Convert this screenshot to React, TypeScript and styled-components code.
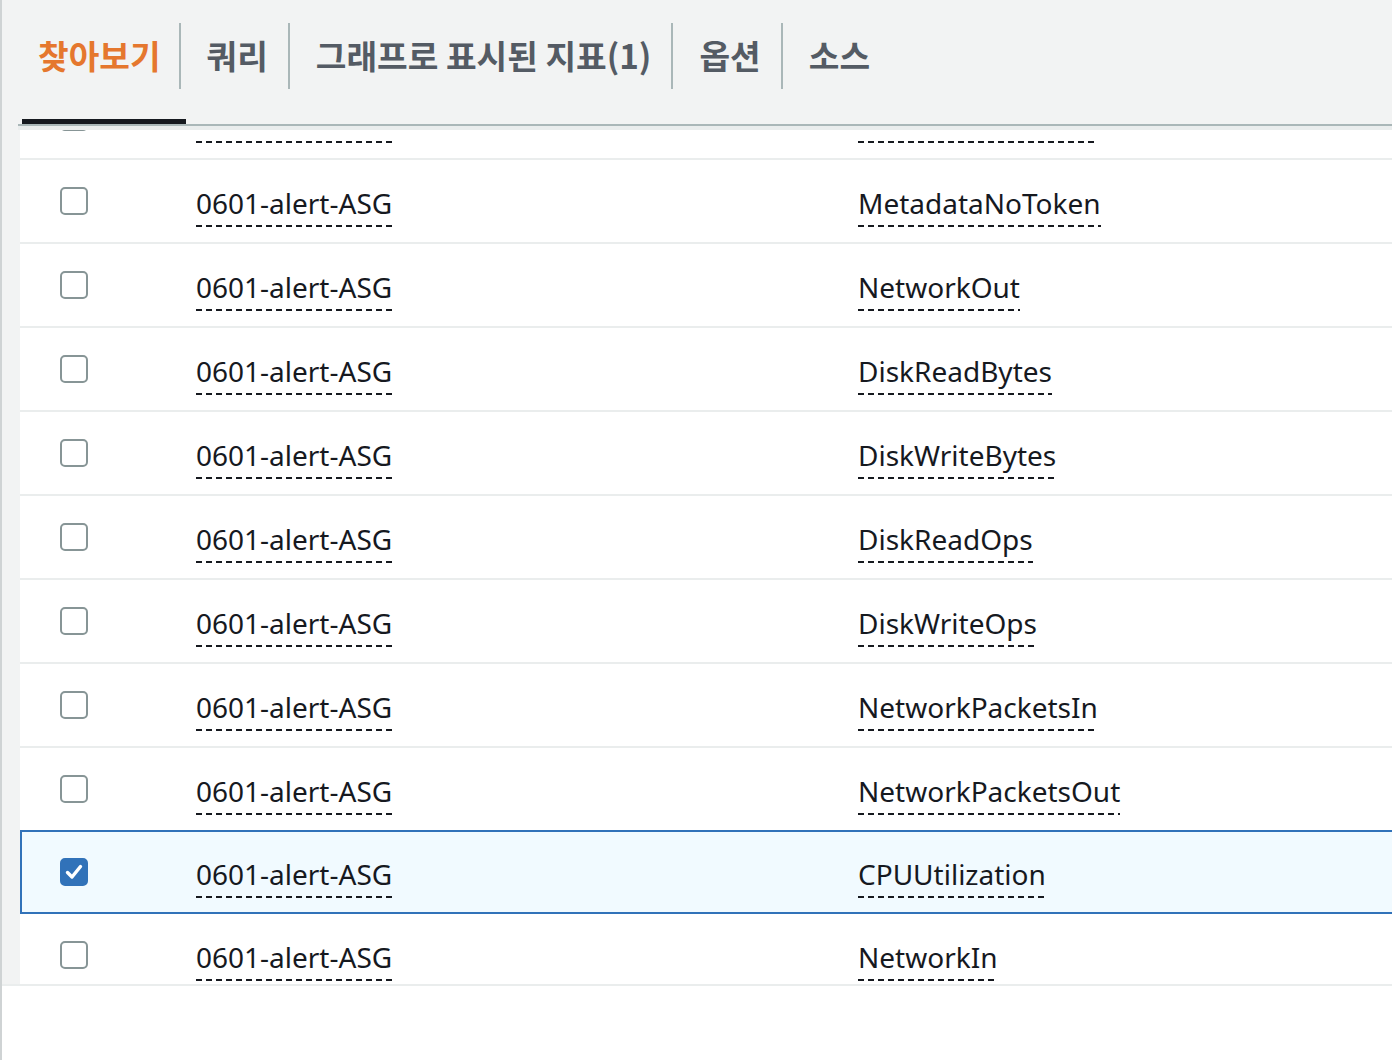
import React, { useLayoutEffect, useRef } from 'react';
import styled, { createGlobalStyle } from 'styled-components';

const tabs = ['찾아보기', '쿼리', '그래프로 표시된 지표(1)', '옵션', '소스'];

const metrics = [
  { name: '0601-alert-ASG', metric: 'StatusCheckFailed', checked: false },
  { name: '0601-alert-ASG', metric: 'MetadataNoToken', checked: false },
  { name: '0601-alert-ASG', metric: 'NetworkOut', checked: false },
  { name: '0601-alert-ASG', metric: 'DiskReadBytes', checked: false },
  { name: '0601-alert-ASG', metric: 'DiskWriteBytes', checked: false },
  { name: '0601-alert-ASG', metric: 'DiskReadOps', checked: false },
  { name: '0601-alert-ASG', metric: 'DiskWriteOps', checked: false },
  { name: '0601-alert-ASG', metric: 'NetworkPacketsIn', checked: false },
  { name: '0601-alert-ASG', metric: 'NetworkPacketsOut', checked: false },
  { name: '0601-alert-ASG', metric: 'CPUUtilization', checked: true },
  { name: '0601-alert-ASG', metric: 'NetworkIn', checked: false },
  { name: '0601-alert-ASG', metric: 'NetworkOut', checked: false },
];

const GlobalStyle = createGlobalStyle`
  html, body {
    margin: 0;
    padding: 0;
    background: #ffffff;
    overflow: hidden;
  }
  * { box-sizing: border-box; }
`;

const Page = styled.div`
  min-height: 1060px;
  background: #ffffff;
  border-left: 2px solid #cfd3d4;
  font-family: 'Noto Sans', 'Noto Sans CJK KR', sans-serif;
  color: #16191f;
`;

const Panel = styled.div`
  background: #f2f3f3;
  padding-left: 16px;
  border-bottom: 2px solid #eaeded;
  overflow: hidden;
`;

const TabBar = styled.div`
  display: flex;
  align-items: center;
  height: 126px;
  border-bottom: 2px solid #aab7b8;
  padding-left: 4px;
  padding-bottom: 12px;
`;

const Tab = styled.div<{ $active?: boolean; $first?: boolean }>`
  position: relative;
  display: flex;
  align-items: center;
  height: 66px;
  padding: 0 ${p => (p.$first ? '18px' : '20px')} 3px ${p => (p.$first ? '16px' : '26px')};
  border-left: ${p => (p.$first ? 'none' : '2px solid #aab7b8')};
  font-family: 'Noto Sans CJK KR', 'Noto Sans', sans-serif;
  font-size: 33.3px;
  font-weight: 700;
  color: ${p => (p.$active ? '#e5772e' : '#545b64')};

  &::after {
    content: '';
    display: ${p => (p.$active ? 'block' : 'none')};
    position: absolute;
    left: 0;
    right: -7px;
    bottom: -35px;
    height: 5px;
    background: #16191f;
  }
`;

const Band = styled.div`
  height: 4px;
  background: #eaeded;
`;

const Scroller = styled.div`
  height: 854px;
  margin-left: 2px;
  overflow: hidden;
  background: #ffffff;
`;

const Row = styled.div<{ $selected?: boolean }>`
  position: relative;
  display: grid;
  grid-template-columns: ${p => (p.$selected ? '174px' : '176px')} 662px 1fr;
  align-items: center;
  height: 84px;
  border-bottom: 2px solid #eaeded;
  background: #ffffff;

  ${p =>
    p.$selected &&
    `
    margin-top: -2px;
    background: #f1faff;
    border-top: 2px solid #3172b9;
    border-left: 2px solid #3172b9;
    border-bottom: 2px solid #3172b9;
  `}
`;

const CheckCell = styled.div<{ $selected?: boolean }>`
  padding-left: ${p => (p.$selected ? '38px' : '40px')};
  display: flex;
  align-items: center;
`;

const Box = styled.span<{ $checked?: boolean }>`
  display: inline-flex;
  align-items: center;
  justify-content: center;
  width: 28px;
  height: 28px;
  border-radius: 5px;
  border: 2px solid ${p => (p.$checked ? '#3172b9' : '#879596')};
  background: ${p => (p.$checked ? '#3172b9' : '#ffffff')};
`;

const Cell = styled.div`
  display: flex;
  align-items: center;
  padding-top: 10px;
`;

const Dotted = styled.span`
  display: inline-block;
  font-size: 28px;
  line-height: 34px;
  padding-bottom: 7px;
  white-space: nowrap;
  background-image: linear-gradient(to right, #16191f 60%, transparent 60%);
  background-size: 10px 2px;
  background-repeat: repeat-x;
  background-position: left bottom;
`;

const Check = () => (
  <svg width="20" height="20" viewBox="0 0 20 20">
    <polyline points="3.5,10.5 8,15 16.5,4.5" fill="none" stroke="#ffffff" strokeWidth="3.4" strokeLinecap="round" strokeLinejoin="round" />
  </svg>
);

export default function App() {
  const scrollRef = useRef<HTMLDivElement>(null);

  useLayoutEffect(() => {
    if (scrollRef.current) scrollRef.current.scrollTop = 54;
  }, []);

  return (
    <Page>
      <GlobalStyle />
      <Panel>
        <TabBar>
          {tabs.map((t, i) => (
            <Tab key={t} $first={i === 0} $active={i === 0}>
              {t}
            </Tab>
          ))}
        </TabBar>
        <Band />
        <Scroller ref={scrollRef}>
          {metrics.map((m, i) => (
            <Row key={i} $selected={m.checked}>
              <CheckCell $selected={m.checked}>
                <Box $checked={m.checked}>{m.checked && <Check />}</Box>
              </CheckCell>
              <Cell>
                <Dotted>{m.name}</Dotted>
              </Cell>
              <Cell>
                <Dotted>{m.metric}</Dotted>
              </Cell>
            </Row>
          ))}
        </Scroller>
      </Panel>
    </Page>
  );
}
